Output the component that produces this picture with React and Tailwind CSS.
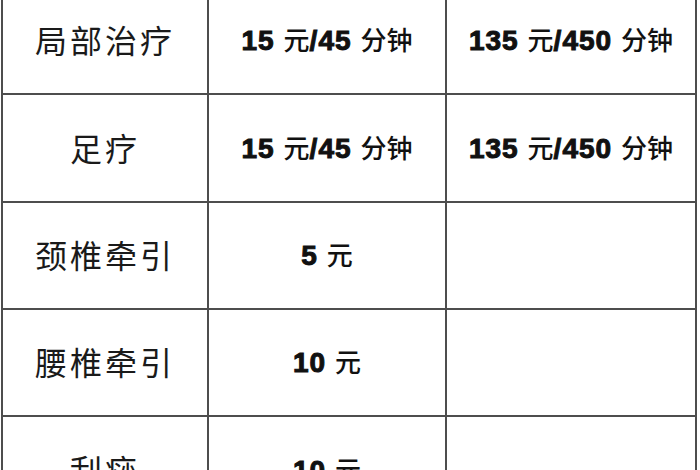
const rows = [
  { name: "局部治疗", price: [["15", "元"], ["/45", "分钟"]], pack: [["135", "元"], ["/450", "分钟"]] },
  { name: "足疗", price: [["15", "元"], ["/45", "分钟"]], pack: [["135", "元"], ["/450", "分钟"]] },
  { name: "颈椎牵引", price: [["5", "元"]], pack: null },
  { name: "腰椎牵引", price: [["10", "元"]], pack: null },
  { name: "刮痧", price: [["10", "元"]], pack: null },
];

// numbers are heavy latin, the unit text is plain CJK
const Price = ({ parts }) => (
  <span className="whitespace-nowrap text-[#111]">
    {parts.map(([num, unit], i) => (
      <span key={i}>
        <span className="font-['Liberation_Sans',sans-serif] font-bold text-[28px] tracking-[1px] [-webkit-text-stroke:1px_#111]">
          {num}
        </span>
        <span className="ml-[9px] font-['Noto_Sans_CJK_SC',sans-serif] text-[26px] font-medium">{unit}</span>
      </span>
    ))}
  </span>
);

const App = () => {
  return (
    <div className="w-[700px] h-[470px] overflow-hidden bg-white">
      <div className="-mt-[15px] ml-[1px] w-[696px] grid grid-cols-[204px_236px_248px] grid-rows-[106px_106px_105px_105px_106px] gap-[2px] p-[2px] bg-[#4d4d4d]">
        {rows.map((row) => (
          <div key={row.name} className="contents">
            <div className="bg-white flex items-center justify-center">
              <span className="-mt-[3px] font-['Noto_Sans_CJK_SC',sans-serif] text-[32px] tracking-[3px] text-[#1a1a1a]">
                {row.name}
              </span>
            </div>
            <div className="bg-white flex items-center justify-center">
              <Price parts={row.price} />
            </div>
            <div className="bg-white flex items-center justify-center">
              {row.pack && <Price parts={row.pack} />}
            </div>
          </div>
        ))}
      </div>
    </div>
  );
};

export default App;
